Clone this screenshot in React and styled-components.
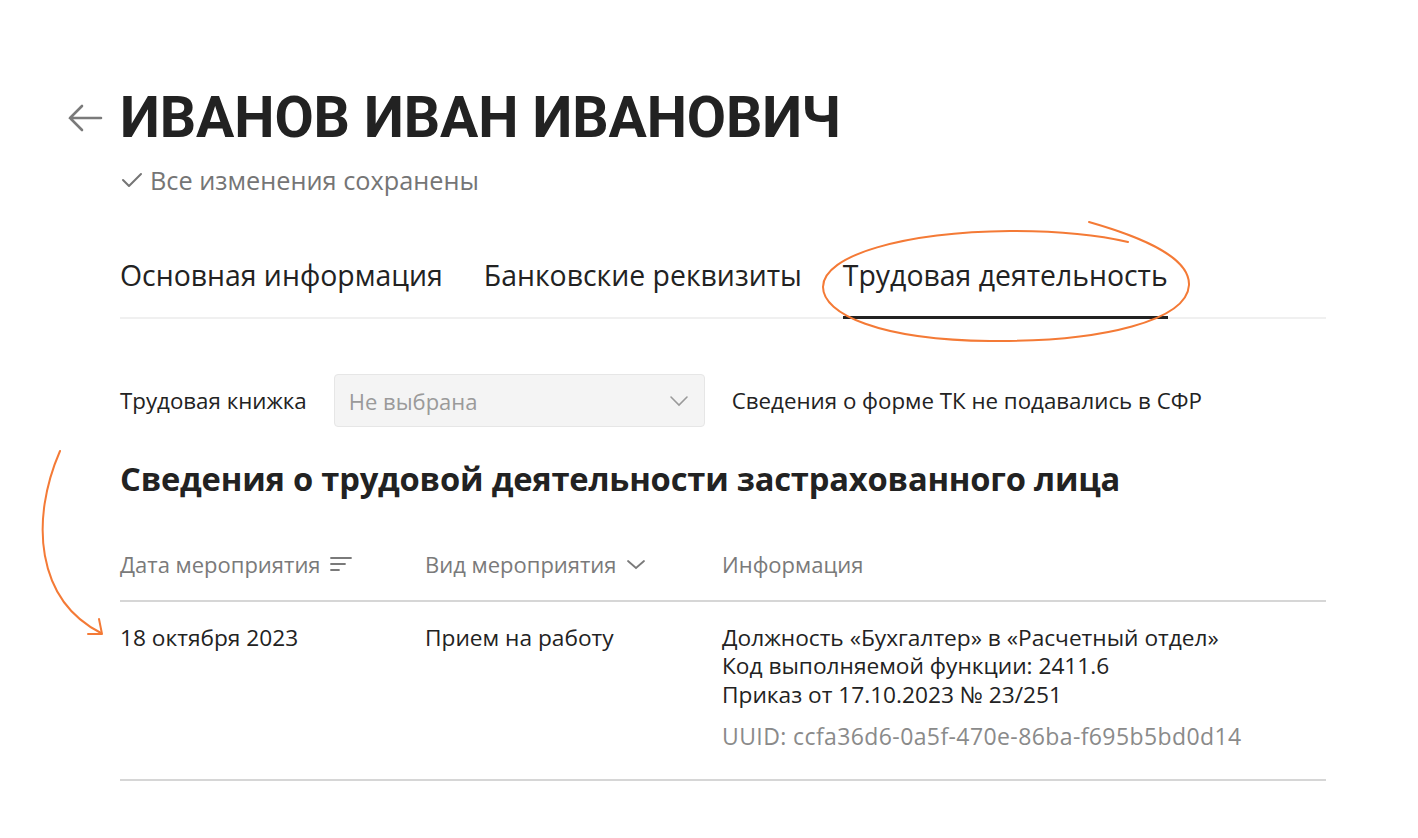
import React from "react";
import styled, { createGlobalStyle } from "styled-components";

const GlobalStyle = createGlobalStyle`
  html, body {
    margin: 0;
    padding: 0;
    background: #ffffff;
    font-family: "Open Sans", "Noto Sans", sans-serif;
    color: #1f1f1f;
  }
`;

const Page = styled.div`
  position: relative;
  width: 1418px;
  height: 838px;
  box-sizing: border-box;
  padding: 86px 92px 0 66px;
  overflow: hidden;
`;

const TitleRow = styled.div`
  display: flex;
  align-items: center;
  gap: 16px;
`;

const BackButton = styled.button`
  border: 0;
  background: none;
  padding: 0;
  width: 38px;
  height: 38px;
  display: flex;
  align-items: center;
  justify-content: center;
  color: #7a7a7a;
  cursor: pointer;
`;

const Title = styled.h1`
  margin: 0;
  font-family: Roboto, "Liberation Sans", sans-serif;
  font-size: 57px;
  line-height: 64px;
  font-weight: 700;
  letter-spacing: -0.1px;
  color: #222;
`;

const Body = styled.div`
  padding-left: 54px;
`;

const Saved = styled.div`
  margin-top: 14px;
  display: flex;
  align-items: center;
  gap: 6px;
  font-size: 25.3px;
  line-height: 32px;
  color: #757575;
`;

const Tabs = styled.div`
  margin-top: 60px;
  display: flex;
  gap: 41px;
  border-bottom: 2px solid #f0f0f0;
`;

const Tab = styled.div`
  font-size: 28.4px;
  line-height: 38px;
  padding-bottom: 22px;
  color: #222;
  border-bottom: 3px solid ${(p) => (p.$active ? "#222" : "transparent")};
  margin-bottom: -2px;
`;

const BookRow = styled.div`
  margin-top: 55px;
  display: flex;
  align-items: center;
  font-size: 22.3px;
  color: #222;
`;

const Select = styled.div`
  margin-left: 27px;
  width: 371px;
  height: 53px;
  box-sizing: border-box;
  padding: 0 14px;
  display: flex;
  align-items: center;
  justify-content: space-between;
  background: #f4f4f4;
  border: 1px solid #e6e6e6;
  border-radius: 4px;
  color: #9a9a9a;
  font-size: 22px;
`;

const Note = styled.span`
  margin-left: 27px;
`;

const Heading = styled.h2`
  margin: 30px 0 0;
  font-size: 32.7px;
  line-height: 44px;
  font-weight: 700;
  letter-spacing: -0.2px;
  color: #222;
`;

const Table = styled.div`
  margin-top: 49px;
`;

const Row = styled.div`
  display: grid;
  grid-template-columns: 305px 297px 1fr;
  border-bottom: 2px solid #d6d6d6;
  padding: ${(p) => (p.$head ? "0 0 21px" : "22px 0 28px")};
  font-size: ${(p) => (p.$head ? "22px" : "22.7px")};
  line-height: 28.5px;
  color: ${(p) => (p.$head ? "#7a7a7a" : "#222")};
`;

const HeadCell = styled.div`
  display: flex;
  align-items: center;
  gap: 9px;
`;

const Uuid = styled.div`
  margin-top: 13px;
  font-size: 23px;
  letter-spacing: 0.4px;
  color: #8a8a8a;
`;

const Annotation = styled.svg`
  position: absolute;
  left: 0;
  top: 0;
  pointer-events: none;
`;

export default function App() {
  return (
    <Page>
      <GlobalStyle />
      <TitleRow>
        <BackButton aria-label="Назад">
          <svg width="36" height="30" viewBox="0 0 36 30" fill="none" stroke="currentColor" strokeWidth="2.6" strokeLinecap="round">
            <path d="M3 15h31M15 3L3 15l12 12" />
          </svg>
        </BackButton>
        <Title>ИВАНОВ ИВАН ИВАНОВИЧ</Title>
      </TitleRow>
      <Body>
        <Saved>
          <svg width="24" height="20" viewBox="0 0 24 20" fill="none" stroke="#757575" strokeWidth="2" strokeLinecap="round" strokeLinejoin="round">
            <path d="M3 10l6 6L21 4" />
          </svg>
          Все изменения сохранены
        </Saved>

        <Tabs>
          <Tab>Основная информация</Tab>
          <Tab>Банковские реквизиты</Tab>
          <Tab $active>Трудовая деятельность</Tab>
        </Tabs>

        <BookRow>
          Трудовая книжка
          <Select>
            Не выбрана
            <svg width="22" height="14" viewBox="0 0 22 14" fill="none" stroke="#9a9a9a" strokeWidth="1.6" strokeLinecap="round">
              <path d="M3 3l8 8 8-8" />
            </svg>
          </Select>
          <Note>Сведения о форме ТК не подавались в СФР</Note>
        </BookRow>

        <Heading>Сведения о трудовой деятельности застрахованного лица</Heading>

        <Table>
          <Row $head>
            <HeadCell>
              Дата мероприятия
              <svg width="22" height="18" viewBox="0 0 22 18" fill="none" stroke="#7a7a7a" strokeWidth="1.8" strokeLinecap="round">
                <path d="M1 3h20M1 9h14M1 15h8" />
              </svg>
            </HeadCell>
            <HeadCell>
              Вид мероприятия
              <svg width="20" height="14" viewBox="0 0 20 14" fill="none" stroke="#7a7a7a" strokeWidth="1.8" strokeLinecap="round">
                <path d="M2 4l8 7 8-7" />
              </svg>
            </HeadCell>
            <HeadCell>Информация</HeadCell>
          </Row>
          <Row>
            <div>18 октября 2023</div>
            <div>Прием на работу</div>
            <div>
              <div>Должность «Бухгалтер» в «Расчетный отдел»</div>
              <div>Код выполняемой функции: 2411.6</div>
              <div>Приказ от 17.10.2023 № 23/251</div>
              <Uuid>UUID: ccfa36d6-0a5f-470e-86ba-f695b5bd0d14</Uuid>
            </div>
          </Row>
        </Table>
      </Body>

      <Annotation width="1418" height="838" viewBox="0 0 1418 838" fill="none" stroke="#f47a36" strokeWidth="2" strokeLinecap="round" strokeLinejoin="round">
        <path d="M1089 222 C1145 238 1190 258 1189 285 C1187 320 1105 342 990 341 C880 340 823 314 823 287 C823 255 905 232 1010 231 C1060 231 1102 236 1128 242" />
        <path d="M60 451 C30 520 36 600 101 633" />
        <path d="M88 634 L102 634 L99 619" />
      </Annotation>
    </Page>
  );
}
